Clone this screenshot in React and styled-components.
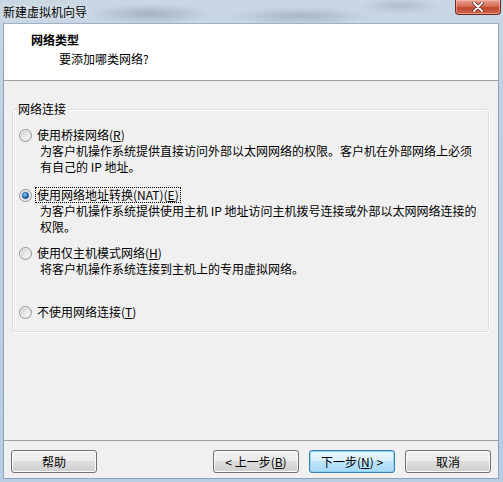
import React from "react";
import styled, { createGlobalStyle } from "styled-components";

const GlobalStyle = createGlobalStyle`
  html, body {
    margin: 0;
    padding: 0;
    background: #c4d3e2;
  }
  body {
    font-family: "Noto Sans CJK SC", "Liberation Sans", sans-serif;
    font-size: 12px;
    color: #000;
  }
`;

const options = [
  {
    id: "bridge",
    label: "使用桥接网络",
    key: "R",
    lines: [
      "为客户机操作系统提供直接访问外部以太网网络的权限。客户机在外部网络上必须",
      "有自己的 IP 地址。",
    ],
    space: 0,
  },
  {
    id: "nat",
    label: "使用网络地址转换(NAT)",
    key: "E",
    lines: [
      "为客户机操作系统提供使用主机 IP 地址访问主机拨号连接或外部以太网网络连接的",
      "权限。",
    ],
    space: 12,
  },
  {
    id: "host",
    label: "使用仅主机模式网络",
    key: "H",
    lines: ["将客户机操作系统连接到主机上的专用虚拟网络。"],
    space: 10,
  },
  {
    id: "none",
    label: "不使用网络连接",
    key: "T",
    lines: [],
    space: 27,
  },
];

const Radio = ({ checked }) => (
  <RadioBox width="13" height="13" viewBox="0 0 13 13">
    <defs>
      <linearGradient id="rbg" x1="0" y1="0" x2="1" y2="1">
        <stop offset="0" stopColor="#cfd0d1" />
        <stop offset="1" stopColor="#ffffff" />
      </linearGradient>
      <radialGradient id="rdot" cx="0.4" cy="0.35" r="0.7">
        <stop offset="0" stopColor="#9fd0f5" />
        <stop offset="0.5" stopColor="#2f7fc9" />
        <stop offset="1" stopColor="#123f7a" />
      </radialGradient>
    </defs>
    <circle cx="6.5" cy="6.5" r="6" fill="#f4f4f4" stroke="#8f8f8f" />
    <circle cx="6.5" cy="6.5" r="4.5" fill="url(#rbg)" stroke="#d6d6d6" strokeWidth="0.6" />
    {checked && <circle cx="6.5" cy="6.5" r="3.2" fill="url(#rdot)" stroke="#1b4e8a" strokeWidth="0.5" />}
  </RadioBox>
);

const Accel = ({ text, k }) => (
  <>
    {text}(<u>{k}</u>)
  </>
);

const App = () => {
  return (
    <>
      <GlobalStyle />
      <Window>
        <TitleBar>
          <Title>新建虚拟机向导</Title>
          <CloseButton>
            <svg width="14" height="10" viewBox="0 0 14 10">
              <path d="M3 1 L11 9 M11 1 L3 9" stroke="#5a1a10" strokeWidth="3.4" strokeLinecap="round" />
              <path d="M3 1 L11 9 M11 1 L3 9" stroke="#ffffff" strokeWidth="2" strokeLinecap="round" />
            </svg>
          </CloseButton>
        </TitleBar>
        <Client>
          <Header>
            <HeaderTitle>网络类型</HeaderTitle>
            <HeaderSub>要添加哪类网络?</HeaderSub>
          </Header>
          <Content>
            <GroupBox>
              <Legend>网络连接</Legend>
              {options.map((o) => (
                <Option key={o.id} space={o.space}>
                  <OptionRow>
                    <Radio checked={o.id === "nat"} />
                    <OptionLabel focused={o.id === "nat"}>
                      <Accel text={o.label} k={o.key} />
                    </OptionLabel>
                  </OptionRow>
                  {o.lines.length > 0 && (
                    <Description>
                      {o.lines.map((l) => (
                        <div key={l}>{l}</div>
                      ))}
                    </Description>
                  )}
                </Option>
              ))}
            </GroupBox>
          </Content>
          <Footer>
            <Button>帮助</Button>
            <NavButtons>
              <Button>
                &lt; 上一步(<u>B</u>)
              </Button>
              <Button primary>
                下一步(<u>N</u>) &gt;
              </Button>
              <Button>取消</Button>
            </NavButtons>
          </Footer>
        </Client>
      </Window>
    </>
  );
};

export default App;

const Window = styled.div`
  width: 503px;
  height: 482px;
  box-sizing: border-box;
  display: flex;
  flex-direction: column;
  padding: 0 4px 3px 3px;
  background:
    radial-gradient(ellipse 60px 10px at 150px 14px, rgba(120, 135, 155, 0.45), transparent),
    radial-gradient(ellipse 70px 9px at 300px 16px, rgba(120, 135, 155, 0.4), transparent),
    radial-gradient(ellipse 40px 8px at 400px 6px, rgba(130, 145, 165, 0.35), transparent),
    linear-gradient(180deg, #c9d6e3 0%, #bccde0 40%, #b8cde4 100%);
`;

const TitleBar = styled.div`
  height: 23px;
  flex: none;
  display: flex;
  align-items: flex-start;
  justify-content: space-between;
`;

const Title = styled.div`
  line-height: 16px;
  padding-top: 4px;
  font-size: 12px;
  color: #000;
  text-shadow: 0 0 6px rgba(255, 255, 255, 0.9);
`;

const CloseButton = styled.div`
  width: 46px;
  height: 15px;
  margin-right: -2px;
  box-sizing: border-box;
  border: 1px solid #6b2a22;
  border-top: none;
  border-radius: 0 0 4px 4px;
  background: linear-gradient(180deg, #e8a293 0%, #d66b57 45%, #c2462d 55%, #d0684d 100%);
  box-shadow: inset 0 0 0 1px rgba(255, 200, 190, 0.5);
  display: flex;
  align-items: center;
  justify-content: center;
`;

const Client = styled.div`
  flex: 1;
  display: flex;
  flex-direction: column;
  background: #f0f0f0;
  border: 1px solid #8da2b8;
  border-top-color: #9fb2c6;
`;

const Header = styled.div`
  height: 48px;
  flex: none;
  background: #ffffff;
  border-bottom: 1px solid #a0a0a0;
  padding: 8px 0 0 27px;
`;

const HeaderTitle = styled.div`
  font-weight: bold;
  line-height: 16px;
`;

const HeaderSub = styled.div`
  line-height: 16px;
  margin-top: 3px;
  padding-left: 28px;
`;

const Content = styled.div`
  flex: 1;
  padding: 20px 9px 0 8px;
`;

const GroupBox = styled.fieldset`
  margin: 0;
  padding: 10px 0 11px 6px;
  border: 1px solid #d5dfe5;
  border-radius: 3px;
  box-shadow: inset 1px 1px 0 #ffffff, 1px 1px 0 #ffffff;
`;

const Legend = styled.legend`
  padding: 0 2px;
  margin-left: -3px;
  line-height: 16px;
`;

const Option = styled.div`
  margin-top: ${(p) => p.space}px;
`;

const OptionRow = styled.div`
  display: flex;
  align-items: center;
  height: 16px;
`;

const RadioBox = styled.svg`
  flex: none;
  display: block;
  margin-right: 3px;
`;

const OptionLabel = styled.span`
  line-height: 14px;
  padding: 0 1px;
  border: 1px dotted ${(p) => (p.focused ? "#000" : "transparent")};
`;

const Description = styled.div`
  padding-left: 21px;
  line-height: 16px;
  white-space: nowrap;
`;

const Footer = styled.div`
  height: 38px;
  flex: none;
  box-sizing: border-box;
  border-top: 1px solid #a0a0a0;
  padding: 9px 7px 0 7px;
  display: flex;
  justify-content: space-between;
  align-items: flex-start;
`;

const NavButtons = styled.div`
  display: flex;
  gap: 10px;
`;

const Button = styled.div`
  width: 86px;
  height: 23px;
  box-sizing: border-box;
  display: flex;
  align-items: center;
  justify-content: center;
  border-radius: 3px;
  border: 1px solid ${(p) => (p.primary ? "#3c7fb1" : "#707070")};
  background: ${(p) =>
    p.primary
      ? "linear-gradient(180deg, #eaf6fd 0%, #d9f0fc 50%, #bee6fd 50%, #a7d9f5 100%)"
      : "linear-gradient(180deg, #f2f2f2 0%, #ebebeb 50%, #dddddd 50%, #cfcfcf 100%)"};
  box-shadow: inset 0 0 0 1px ${(p) => (p.primary ? "#8bd3f4" : "#fbfbfb")};
  font-size: 12px;
  line-height: 14px;
`;
